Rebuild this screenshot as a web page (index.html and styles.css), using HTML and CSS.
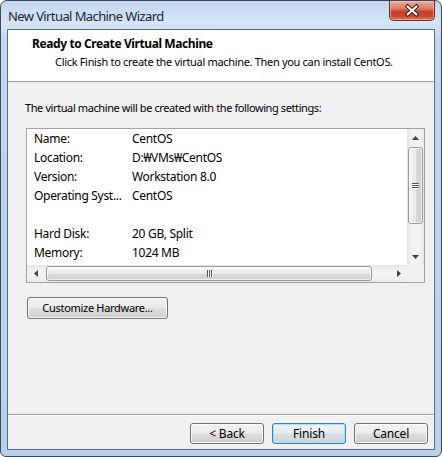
FILE: index.html
```html
<!DOCTYPE html>
<html>
<head>
<meta charset="utf-8">
<link rel="stylesheet" href="styles.css">
</head>
<body>
<div class="window">
  <div class="titlebar">
    <div class="title">New Virtual Machine Wizard</div>
    <div class="close">
      <svg width="46" height="19" viewBox="0 0 46 19">
        <path d="M18.5 5.5 L27.5 13.5 M27.5 5.5 L18.5 13.5" stroke="#3b1a14" stroke-width="4.2" stroke-linecap="square" fill="none"/>
        <path d="M18.5 5.5 L27.5 13.5 M27.5 5.5 L18.5 13.5" stroke="#ffffff" stroke-width="2.2" stroke-linecap="square" fill="none"/>
      </svg>
    </div>
  </div>
  <div class="client">
    <div class="header">
      <div class="h-title">Ready to Create Virtual Machine</div>
      <div class="h-sub">Click Finish to create the virtual machine. Then you can install CentOS.</div>
    </div>
    <div class="body">
      <div class="intro">The virtual machine will be created with the following settings:</div>
      <div class="listbox">
        <div class="list-content">
          <div class="row"><span class="k">Name:</span><span class="v">CentOS</span></div>
          <div class="row"><span class="k">Location:</span><span class="v">D:₩VMs₩CentOS</span></div>
          <div class="row"><span class="k">Version:</span><span class="v">Workstation 8.0</span></div>
          <div class="row"><span class="k">Operating Syst...</span><span class="v">CentOS</span></div>
          <div class="row"><span class="k"></span><span class="v"></span></div>
          <div class="row"><span class="k">Hard Disk:</span><span class="v">20 GB, Split</span></div>
          <div class="row"><span class="k">Memory:</span><span class="v">1024 MB</span></div>
        </div>
        <div class="vscroll">
          <div class="sbtn"><svg width="7" height="4" viewBox="0 0 7 4"><path d="M0 4 L3.5 0 L7 4 Z" fill="#404040"/></svg></div>
          <div class="vtrack"><div class="vthumb"><span class="grip-h"></span><span class="grip-h"></span><span class="grip-h"></span></div></div>
          <div class="sbtn"><svg width="7" height="4" viewBox="0 0 7 4"><path d="M0 0 L3.5 4 L7 0 Z" fill="#404040"/></svg></div>
        </div>
        <div class="hscroll">
          <div class="sbtn"><svg width="4" height="7" viewBox="0 0 4 7"><path d="M4 0 L0 3.5 L4 7 Z" fill="#404040"/></svg></div>
          <div class="htrack"><div class="hthumb"><span class="grip-v"></span><span class="grip-v"></span><span class="grip-v"></span></div></div>
          <div class="sbtn"><svg width="4" height="7" viewBox="0 0 4 7"><path d="M0 0 L4 3.5 L0 7 Z" fill="#404040"/></svg></div>
        </div>
        <div class="corner"></div>
      </div>
      <button class="btn custom">Customize Hardware...</button>
    </div>
    <div class="footer">
      <button class="btn">&lt; Back</button>
      <button class="btn default">Finish</button>
      <button class="btn">Cancel</button>
    </div>
  </div>
</div>
</body>
</html>
```

FILE: styles.css
```css
* { box-sizing: border-box; }
html, body { margin: 0; padding: 0; background: #ffffff; }
body {
  width: 442px;
  height: 457px;
  font-family: "Noto Sans", "Open Sans", sans-serif;
  font-size: 12px;
  color: #000;
}
.window {
  width: 442px;
  height: 457px;
  border: 1px solid #3a4a5c;
  border-radius: 7px 7px 6px 6px;
  background: linear-gradient(180deg, #c2d7ee 0px, #d6e5f5 22px, #c0d6ee 40px, #b9d1eb 100%);
  display: flex;
  flex-direction: column;
  padding: 0 6px 6px 6px;
  overflow: hidden;
}
.titlebar {
  height: 28px;
  display: flex;
  justify-content: space-between;
  align-items: flex-start;
  flex: none;
}
.title {
  padding-left: 1px;
  margin-top: 6px;
  font-size: 13px;
  letter-spacing: -0.6px;
  line-height: 18px;
  color: #1a2636;
}
.close {
  width: 46px;
  height: 20px;
  border: 1px solid #6e2a1e;
  border-top: none;
  border-radius: 0 0 5px 5px;
  background: linear-gradient(180deg, #e9a99a 0%, #dc7e68 40%, #c7432a 55%, #c84a30 80%, #e07a58 100%);
  box-shadow: inset 0 0 0 1px rgba(255,220,210,0.45);
  display: flex;
  align-items: center;
  justify-content: center;
}
.close svg { display: block; }
.client {
  flex: 1;
  border: 1px solid #5b6d82;
  background: #f0f0f0;
  display: flex;
  flex-direction: column;
}
.header {
  height: 52px;
  background: #ffffff;
  border-bottom: 1px solid #a0a0a0;
  padding-top: 6px;
  flex: none;
}
.h-title {
  padding-left: 24px;
  font-weight: bold;
  letter-spacing: -0.4px;
  line-height: 16px;
}
.h-sub {
  padding-left: 47px;
  font-size: 11px;
  letter-spacing: -0.32px;
  line-height: 16px;
  margin-top: 2px;
  white-space: nowrap;
}
.body {
  flex: 1;
  padding: 18px 9px 0 17px;
  display: flex;
  flex-direction: column;
  align-items: flex-start;
}
.intro {
  font-size: 11px;
  letter-spacing: -0.4px;
  line-height: 16px;
  margin-bottom: 12px;
  white-space: nowrap;
}
.listbox {
  margin-left: 1px;
  width: 399px;
  height: 155px;
  border: 1px solid #9ea3ab;
  background: #ffffff;
  display: grid;
  grid-template-columns: 1fr 17px;
  grid-template-rows: 1fr 17px;
  overflow: hidden;
}
.list-content {
  padding-left: 7px;
  overflow: hidden;
}
.row {
  display: flex;
  height: 19px;
  line-height: 19px;
  white-space: nowrap;
  letter-spacing: -0.3px;
}
.k { width: 98px; flex: none; }
.v { flex: none; }
.vscroll {
  display: flex;
  flex-direction: column;
  background: linear-gradient(90deg, #e4e4e4 0%, #f2f2f2 30%, #f3f3f3 70%, #e9e9e9 100%);
}
.sbtn {
  width: 17px;
  height: 17px;
  flex: none;
  display: flex;
  align-items: center;
  justify-content: center;
}
.sbtn svg { display: block; }
.vtrack {
  flex: 1;
  padding: 1px 0 0 0;
}
.vthumb {
  width: 15px;
  height: 77px;
  margin-left: 1px;
  border: 1px solid #9a9a9a;
  border-radius: 3px;
  background: linear-gradient(90deg, #f5f5f5 0%, #eaeaea 50%, #d9d9d9 51%, #cecece 100%);
  box-shadow: inset 0 0 0 1px rgba(255,255,255,0.7);
  display: flex;
  flex-direction: column;
  align-items: center;
  justify-content: center;
  gap: 1px;
}
.grip-h {
  display: block;
  width: 7px;
  height: 1px;
  background: #555;
  box-shadow: 0 1px 0 #fff;
}
.hscroll {
  display: flex;
  background: linear-gradient(180deg, #e4e4e4 0%, #f2f2f2 30%, #f3f3f3 70%, #e9e9e9 100%);
}
.htrack {
  flex: 1;
  padding: 1px 0 0 2px;
}
.hthumb {
  width: 326px;
  height: 15px;
  border: 1px solid #9a9a9a;
  border-radius: 3px;
  background: linear-gradient(180deg, #f5f5f5 0%, #eaeaea 50%, #d9d9d9 51%, #cecece 100%);
  box-shadow: inset 0 0 0 1px rgba(255,255,255,0.7);
  display: flex;
  align-items: center;
  justify-content: center;
  gap: 1px;
}
.grip-v {
  display: block;
  width: 1px;
  height: 7px;
  background: #555;
  box-shadow: 1px 0 0 #fff;
}
.corner { background: #f0f0f0; }
.btn {
  font-family: inherit;
  font-size: 12px;
  color: #000;
  height: 21px;
  padding: 0;
  border: 1px solid #707070;
  border-radius: 3px;
  background: linear-gradient(180deg, #f2f2f2 0%, #ebebeb 48%, #dddddd 52%, #cfcfcf 100%);
  box-shadow: inset 0 0 0 1px rgba(255,255,255,0.8);
  line-height: 18px;
  letter-spacing: -0.2px;
}
.custom {
  margin-top: 14px;
  margin-left: 2px;
  width: 141px;
  height: 22px;
  font-size: 11px;
  letter-spacing: -0.3px;
}
.footer {
  flex: none;
  border-top: 1px solid #a0a0a0;
  box-shadow: inset 0 1px 0 #ffffff;
  height: 35px;
  padding: 8px 6px 0 0;
  display: flex;
  justify-content: flex-end;
  gap: 8px;
}
.footer .btn { width: 74px; }
.default {
  border-color: #3c7fb1;
  box-shadow: inset 0 0 0 1px #a8e2fa;
  background: linear-gradient(180deg, #f0f4f7 0%, #e6ecf0 48%, #d6dfe5 52%, #cbd6de 100%);
}
```
